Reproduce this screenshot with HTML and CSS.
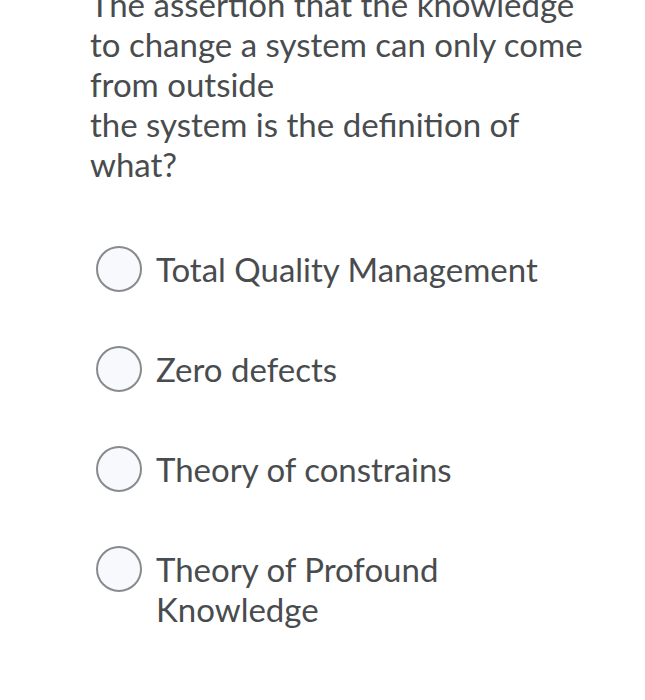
FILE: index.html
```html
<!DOCTYPE html>
<html>
<head>
<meta charset="utf-8">
<link rel="stylesheet" href="styles.css">
</head>
<body>
<div class="page">
  <div class="question">The assertion that the knowledge<br>to change a system can only come<br>from outside<br>the system is the definition of<br>what?</div>
  <div class="options">
    <label class="option"><span class="radio"></span><span class="label">Total Quality Management</span></label>
    <label class="option"><span class="radio"></span><span class="label">Zero defects</span></label>
    <label class="option"><span class="radio"></span><span class="label">Theory of constrains</span></label>
    <label class="option"><span class="radio"></span><span class="label">Theory of Profound<br>Knowledge</span></label>
  </div>
</div>
</body>
</html>
```
FILE: styles.css
```css
html, body {
  margin: 0;
  padding: 0;
  background: #ffffff;
}
.page {
  font-family: Lato, "Open Sans", sans-serif;
  color: #494c4e;
  font-size: 33px;
  line-height: 40px;
  padding-left: 90px;
  margin-top: -16px;
}
.question {
  margin: 0;
}
.options {
  display: flex;
  flex-direction: column;
  gap: 20px;
  margin-top: 65px;
}
.option {
  display: flex;
  align-items: flex-start;
  gap: 14px;
  min-height: 80px;
}
.radio {
  flex: none;
  box-sizing: border-box;
  width: 46px;
  height: 46px;
  margin-left: 6px;
  margin-top: -3px;
  border: 2px solid #878b8e;
  border-radius: 50%;
  background: #f8f9fd;
}
.label {
  display: block;
}
```
